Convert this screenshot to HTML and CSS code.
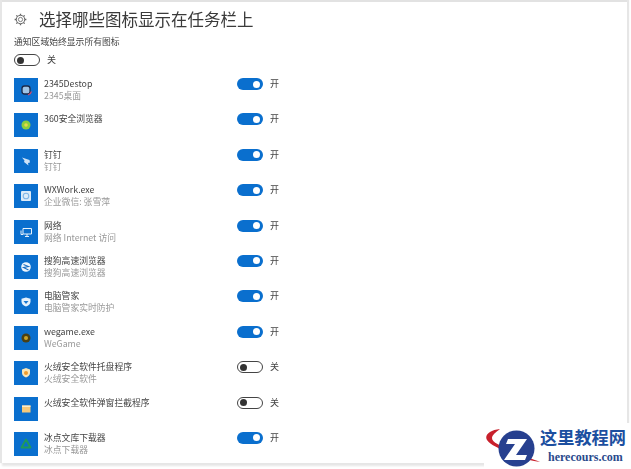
FILE: index.html
```html
<!DOCTYPE html>
<html lang="zh-CN">
<head>
    <meta charset="UTF-8">
    <title>选择哪些图标显示在任务栏上</title>
    <link rel="stylesheet" href="styles.css">
</head>
<body>
    <div class="panel">
        <div class="title-row">
            <svg class="gear" viewBox="0 0 16 16" width="13" height="13">
                <circle cx="8" cy="8" r="2.6" fill="none" stroke="#666" stroke-width="1"/>
                <circle cx="8" cy="8" r="5.2" fill="none" stroke="#666" stroke-width="1.2"/>
                <path d="M8 .8v2M8 13.2v2M.8 8h2M13.2 8h2M2.9 2.9l1.4 1.4M11.7 11.7l1.4 1.4M2.9 13.1l1.4-1.4M11.7 4.3l1.4-1.4" stroke="#666" stroke-width="1.6"/>
            </svg>
            <h1>选择哪些图标显示在任务栏上</h1>
        </div>
        <div class="always-label">通知区域始终显示所有图标</div>
        <div class="always-toggle">
            <span class="switch off"></span><span class="state">关</span>
        </div>

        <div class="app-row">
            <span class="app-icon">
                <svg viewBox="0 0 24 24" width="24" height="24"><rect x="8" y="8" width="8" height="8" rx="2.500" fill="#9fc4e6" stroke="#1c2a4a" stroke-width="1.300"/><path d="M14 17a5 5 0 0 0 3.500-3.500" stroke="#d8476a" stroke-width="1.100" fill="none"/></svg>
            </span>
            <div class="app-text"><div class="app-name">2345Destop</div><div class="app-sub">2345桌面</div></div>
            <span class="switch on"></span><span class="state">开</span>
        </div>
        <div class="app-row">
            <span class="app-icon">
                <svg viewBox="0 0 24 24" width="24" height="24"><circle cx="12" cy="12" r="4.500" fill="#8ccf3f"/><circle cx="12" cy="12" r="1.800" fill="#e8d94a"/></svg>
            </span>
            <div class="app-text"><div class="app-name">360安全浏览器</div></div>
            <span class="switch on"></span><span class="state">开</span>
        </div>
        <div class="app-row">
            <span class="app-icon">
                <svg viewBox="0 0 24 24" width="24" height="24"><path d="M8 8.500l7.500 2.500.5 2.500-2 .5.500 2.500-4.500-3.500.5-1.500z" fill="#cfe3f7"/></svg>
            </span>
            <div class="app-text"><div class="app-name">钉钉</div><div class="app-sub">钉钉</div></div>
            <span class="switch on"></span><span class="state">开</span>
        </div>
        <div class="app-row">
            <span class="app-icon">
                <svg viewBox="0 0 24 24" width="24" height="24"><rect x="7" y="7" width="10" height="10" rx="1" fill="#dcebf8"/><circle cx="12" cy="12" r="2.800" fill="none" stroke="#7fb5e6" stroke-width="1.100"/></svg>
            </span>
            <div class="app-text"><div class="app-name">WXWork.exe</div><div class="app-sub">企业微信: 张雪萍</div></div>
            <span class="switch on"></span><span class="state">开</span>
        </div>
        <div class="app-row">
            <span class="app-icon">
                <svg viewBox="0 0 24 24" width="24" height="24"><path d="M9 8.500h8.500v5.500H9zM13 14v2.500M11 16.500h4M7 10.500v4h2" fill="none" stroke="#e8f2fb" stroke-width="1"/></svg>
            </span>
            <div class="app-text"><div class="app-name">网络</div><div class="app-sub">网络 Internet 访问</div></div>
            <span class="switch on"></span><span class="state">开</span>
        </div>
        <div class="app-row">
            <span class="app-icon">
                <svg viewBox="0 0 24 24" width="24" height="24"><circle cx="12" cy="12" r="4.800" fill="#eef5fc"/><path d="M9.500 9.500l5 2-5 1 5 2.500" fill="none" stroke="#1a6fc4" stroke-width="1.100"/></svg>
            </span>
            <div class="app-text"><div class="app-name">搜狗高速浏览器</div><div class="app-sub">搜狗高速浏览器</div></div>
            <span class="switch on"></span><span class="state">开</span>
        </div>
        <div class="app-row">
            <span class="app-icon">
                <svg viewBox="0 0 24 24" width="24" height="24"><path d="M12 7.500l4.500 1.300v3c0 2.400-2 3.800-4.500 4.700-2.500-.9-4.500-2.300-4.500-4.700v-3z" fill="#e6f1fb"/><path d="M9.500 11h5l-2.500 3z" fill="#1a78d2"/></svg>
            </span>
            <div class="app-text"><div class="app-name">电脑管家</div><div class="app-sub">电脑管家实时防护</div></div>
            <span class="switch on"></span><span class="state">开</span>
        </div>
        <div class="app-row">
            <span class="app-icon">
                <svg viewBox="0 0 24 24" width="24" height="24"><circle cx="12" cy="12" r="4.500" fill="#4a4015"/><circle cx="12" cy="12" r="2" fill="#c9a227"/></svg>
            </span>
            <div class="app-text"><div class="app-name">wegame.exe</div><div class="app-sub">WeGame</div></div>
            <span class="switch on"></span><span class="state">开</span>
        </div>
        <div class="app-row">
            <span class="app-icon">
                <svg viewBox="0 0 24 24" width="24" height="24"><path d="M12 7l4 1.500v3.500c0 2.300-1.800 3.700-4 4.500-2.200-.8-4-2.200-4-4.500V8.500z" fill="#f9e6b8"/><circle cx="12" cy="12" r="2" fill="#ef9c2c"/></svg>
            </span>
            <div class="app-text"><div class="app-name">火绒安全软件托盘程序</div><div class="app-sub">火绒安全软件</div></div>
            <span class="switch off"></span><span class="state">关</span>
        </div>
        <div class="app-row">
            <span class="app-icon">
                <svg viewBox="0 0 24 24" width="24" height="24"><rect x="8" y="8.500" width="8.500" height="7" fill="#f5c97a"/><rect x="8" y="8.500" width="8.500" height="1.500" fill="#fbeccb"/></svg>
            </span>
            <div class="app-text"><div class="app-name">火绒安全软件弹窗拦截程序</div></div>
            <span class="switch off"></span><span class="state">关</span>
        </div>
        <div class="app-row">
            <span class="app-icon">
                <svg viewBox="0 0 24 24" width="24" height="24"><path d="M12 7.500l4.500 8h-9z" fill="none" stroke="#1f9a5a" stroke-width="1.800" stroke-linejoin="round"/></svg>
            </span>
            <div class="app-text"><div class="app-name">冰点文库下载器</div><div class="app-sub">冰点下载器</div></div>
            <span class="switch on"></span><span class="state">开</span>
        </div>
    </div>

    <div class="watermark">
        <svg class="wm-logo" viewBox="0 0 56 42" width="56" height="42">
            <path d="M16 2C6 3 0 8 3 13c3 5 14 9 24 14 11 5 22 7 29 8-7-3-18-6-28-11C18 19 8 16 8 11c0-3 4-6 8-9z" fill="#c8202c"/>
            <circle cx="32.500" cy="21.500" r="18" fill="#27408f"/>
            <path d="M24 12h19l-11 16h11l-2 5H20l11-16h-9z" fill="#fff"/>
        </svg>
        <div class="wm-text">
            <div class="wm-name">这里教程网</div>
            <div class="wm-url">herecours.com</div>
        </div>
    </div>
</body>
</html>
```

FILE: styles.css
```css
html, body {
    margin: 0;
    padding: 0;
}

body {
    width: 631px;
    height: 469px;
    overflow: hidden;
    position: relative;
    background-color: #fff;
    font-family: "Noto Sans CJK SC", "Noto Sans", sans-serif;
    color: #333;
}

.panel {
    box-sizing: border-box;
    width: 625px;
    height: 463px;
    margin-left: 2px;
    padding: 5px 0 0 12px;
    border-top: 2px solid #e2e2e2;
    box-shadow: -2px 0 1px #e6e6e6, 2px 0 1px #e6e6e6, 0 3px 2px #e6e6e6;
    background-color: #fff;
    filter: blur(0.4px);
}

.title-row {
    display: flex;
    align-items: center;
    height: 24px;
}

.gear {
    margin-right: 12px;
}

h1 {
    margin: 0;
    font-size: 16.500px;
    font-weight: 400;
    color: #3a3a3a;
}

.always-label {
    margin-top: 4px;
    font-size: 8.800px;
    line-height: 13px;
    color: #444;
}

.always-toggle {
    display: flex;
    align-items: center;
    height: 14px;
    margin-top: 5px;
}

.always-toggle .state {
    margin-left: 7px;
}

.app-row {
    display: flex;
    align-items: flex-start;
    height: 35.400px;
}

.always-toggle + .app-row {
    margin-top: 11px;
}

.app-icon {
    display: flex;
    align-items: center;
    justify-content: center;
    width: 24px;
    height: 24px;
    background-color: #0a6fce;
    flex-shrink: 0;
}

.app-text {
    width: 193px;
    margin-left: 6px;
    flex-shrink: 0;
}

.app-name {
    font-size: 8.800px;
    line-height: 12px;
    color: #444;
}

.app-sub {
    font-size: 8.800px;
    line-height: 11px;
    color: #999;
}

.switch {
    display: inline-block;
    box-sizing: border-box;
    position: relative;
    width: 26px;
    height: 12px;
    border-radius: 6px;
    flex-shrink: 0;
}

.switch.on {
    background-color: #0a6fce;
}

.switch.off {
    background-color: #fff;
    border: 1.500px solid #444;
}

.switch::after {
    content: "";
    position: absolute;
    top: 50%;
    width: 7px;
    height: 7px;
    margin-top: -3.500px;
    border-radius: 50%;
}

.switch.on::after {
    right: 3px;
    background-color: #fff;
}

.switch.off::after {
    left: 2px;
    background-color: #333;
}

.state {
    margin-left: 7px;
    font-size: 9px;
    line-height: 12px;
    color: #444;
}

.watermark {
    position: absolute;
    right: 0;
    bottom: 0;
    box-sizing: border-box;
    width: 147px;
    height: 46px;
    display: flex;
    align-items: flex-end;
    background-color: #fff;
}

.wm-logo {
    flex-shrink: 0;
}

.wm-text {
    width: 91px;
    padding-bottom: 6px;
}

.wm-name {
    font-size: 17.200px;
    line-height: 20px;
    font-weight: 700;
    color: #1c4fa0;
    white-space: nowrap;
}

.wm-url {
    margin-top: 4px;
    padding-left: 8px;
    font-family: "Liberation Serif", serif;
    font-size: 12px;
    line-height: 12px;
    font-weight: 700;
    color: #2a4a8c;
}
```
